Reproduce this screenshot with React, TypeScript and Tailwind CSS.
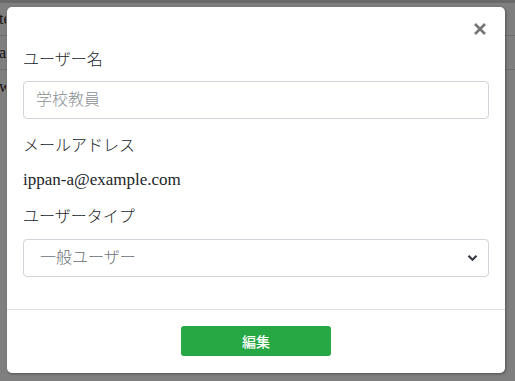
import React from "react";

const serif = { fontFamily: '"Liberation Serif", "Noto Sans CJK JP", serif' };

export default function App() {
  return (
    <div className="relative w-[515px] h-[381px] overflow-hidden bg-[#7f7f7f]" style={serif}>
      {/* dimmed page behind the overlay */}
      <div className="flex flex-col text-[16px] text-[#111]">
        <div className="h-[3px] bg-[#6a6a6a]" />
        <div className="h-[33px] flex items-center border-b border-[#6e6e6e]">
          <span className="w-[7px] overflow-hidden whitespace-nowrap -ml-[1px]">test</span>
        </div>
        <div className="h-[34px] flex items-center border-b border-[#6e6e6e]">
          <span className="w-[7px] overflow-hidden whitespace-nowrap -ml-[1px]">a</span>
        </div>
        <div className="h-[34px] flex items-center">
          <span className="w-[7px] overflow-hidden whitespace-nowrap -ml-[1px]">w</span>
        </div>
      </div>

      {/* modal */}
      <div className="absolute left-[7px] top-[7px] w-[498px] h-[366px] bg-white rounded-[5px] shadow-[1px_1px_3px_rgba(0,0,0,0.35)] flex flex-col">
        <div className="h-[30px] flex items-end justify-end pr-[18px]">
          <svg width="14" height="14" viewBox="0 0 14 14" className="mb-[1px]">
            <path d="M2 2 L12 12 M12 2 L2 12" stroke="#757575" strokeWidth="2.6" strokeLinecap="butt" />
          </svg>
        </div>
        <div className="flex flex-col px-4 pt-[11px] text-[16px] text-[#212529]">
          <div className="h-[24px] leading-[24px] font-light">ユーザー名</div>
          <div className="mt-[9px] h-[38px] border border-[#ced4da] rounded-[4px] flex items-center pl-[12px] text-[#8a8f94] font-light">
            学校教員
          </div>
          <div className="mt-[15px] h-[24px] leading-[24px] font-light">メールアドレス</div>
          <div className="mt-[10px] h-[24px] leading-[24px] text-[17px]">ippan-a@example.com</div>
          <div className="mt-[13px] h-[24px] leading-[24px] font-light">ユーザータイプ</div>
          <div className="mt-[10px] h-[38px] border border-[#ced4da] rounded-[4px] flex items-center pl-[16px] pr-[10px] text-[#6b6f73] font-light">
            <span className="flex-1">一般ユーザー</span>
            <svg width="11" height="8" viewBox="0 0 11 8">
              <path d="M1.5 1.8 L5.5 5.8 L9.5 1.8" stroke="#343a40" strokeWidth="2.2" fill="none" />
            </svg>
          </div>
        </div>
        <div className="mt-[32px] border-t border-[#dee2e6] flex justify-center pt-[16px]">
          <button className="w-[150px] h-[30px] bg-[#28a745] rounded-[3px] text-white text-[14px] font-medium flex items-center justify-center" style={{ fontFamily: '"Noto Sans CJK JP", sans-serif' }}>
            編集
          </button>
        </div>
      </div>
    </div>
  );
}
